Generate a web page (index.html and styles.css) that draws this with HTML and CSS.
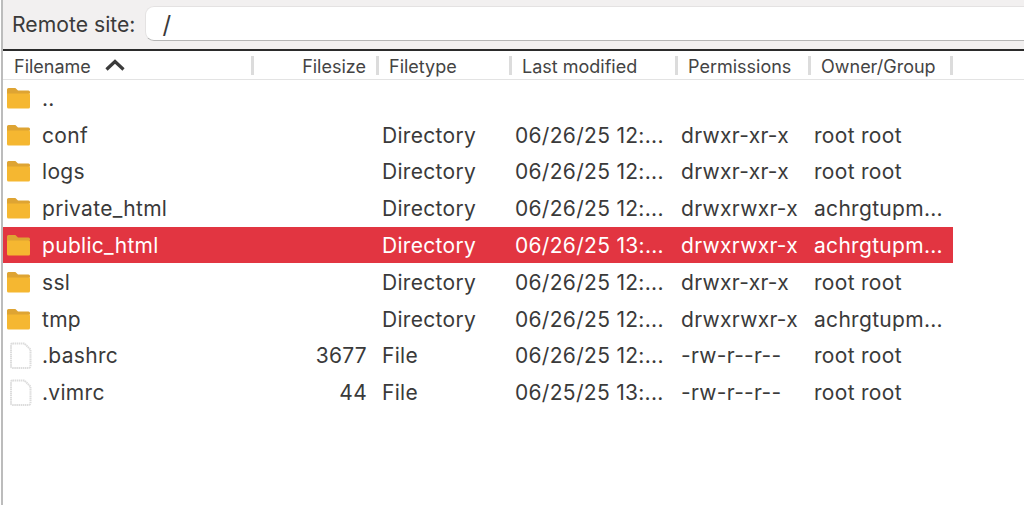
FILE: index.html
```html
<!DOCTYPE html>
<html lang="en">
<head>
    <meta charset="UTF-8">
    <meta name="viewport" content="width=device-width, initial-scale=1.0">
    <title>Remote site</title>
    <link rel="stylesheet" href="styles.css">
</head>
<body>
    <svg class="defs" width="0" height="0">
        <symbol id="folder" viewBox="0 0 25 23">
            <path fill="#f5b731" d="M1 6h21.500a1.500 1.500 0 0 1 1.500 1.500V20a1.500 1.500 0 0 1-1.500 1.500h-20A1.500 1.500 0 0 1 1 20z"/>
            <path fill="#dea433" d="M1 2.500A1.500 1.500 0 0 1 2.500 1h6c1 0 1.500.4 2.200 1.200L12 3.500h10.500A1.500 1.500 0 0 1 24 5v1.500H1z"/>
        </symbol>
        <symbol id="file" viewBox="0 0 22 27">
            <path fill="#fff" stroke="#dcdcdc" stroke-width="2" stroke-dasharray="1.500 .6" d="M2.500 1.500h12l6 6V24a2 2 0 0 1-2 2h-16a1.500 1.500 0 0 1-1.500-1.500V3a1.500 1.500 0 0 1 1.500-1.500z"/>
        </symbol>
    </svg>

    <div class="window">
        <div class="site-bar">
            <label class="site-label">Remote site:</label>
            <div class="site-path">/</div>
        </div>

        <div class="columns header">
            <div class="col-head first">Filename
                <svg class="sort" viewBox="0 0 22 14" width="22" height="14"><path d="M2.500 11.500 11 3.500l8.500 8" fill="none" stroke="#3b3b3b" stroke-width="3.200"/></svg>
            </div>
            <div class="col-head size">Filesize</div>
            <div class="col-head">Filetype</div>
            <div class="col-head">Last modified</div>
            <div class="col-head">Permissions</div>
            <div class="col-head">Owner/Group</div>
        </div>

        <div class="columns row">
            <div class="name"><svg class="icon"><use href="#folder"/></svg>..</div>
            <div></div><div></div><div></div><div></div><div></div>
        </div>
        <div class="columns row">
            <div class="name"><svg class="icon"><use href="#folder"/></svg>conf</div>
            <div class="size"></div><div>Directory</div><div>06/26/25 12:...</div><div>drwxr-xr-x</div><div>root root</div>
        </div>
        <div class="columns row">
            <div class="name"><svg class="icon"><use href="#folder"/></svg>logs</div>
            <div class="size"></div><div>Directory</div><div>06/26/25 12:...</div><div>drwxr-xr-x</div><div>root root</div>
        </div>
        <div class="columns row">
            <div class="name"><svg class="icon"><use href="#folder"/></svg>private_html</div>
            <div class="size"></div><div>Directory</div><div>06/26/25 12:...</div><div>drwxrwxr-x</div><div>achrgtupm...</div>
        </div>
        <div class="columns row selected">
            <div class="name"><svg class="icon"><use href="#folder"/></svg>public_html</div>
            <div class="size"></div><div>Directory</div><div>06/26/25 13:...</div><div>drwxrwxr-x</div><div>achrgtupm...</div>
        </div>
        <div class="columns row">
            <div class="name"><svg class="icon"><use href="#folder"/></svg>ssl</div>
            <div class="size"></div><div>Directory</div><div>06/26/25 12:...</div><div>drwxr-xr-x</div><div>root root</div>
        </div>
        <div class="columns row">
            <div class="name"><svg class="icon"><use href="#folder"/></svg>tmp</div>
            <div class="size"></div><div>Directory</div><div>06/26/25 12:...</div><div>drwxrwxr-x</div><div>achrgtupm...</div>
        </div>
        <div class="columns row">
            <div class="name"><svg class="icon file"><use href="#file"/></svg>.bashrc</div>
            <div class="size">3677</div><div>File</div><div>06/26/25 12:...</div><div>-rw-r--r--</div><div>root root</div>
        </div>
        <div class="columns row">
            <div class="name"><svg class="icon file"><use href="#file"/></svg>.vimrc</div>
            <div class="size">44</div><div>File</div><div>06/25/25 13:...</div><div>-rw-r--r--</div><div>root root</div>
        </div>
    </div>
</body>
</html>
```

FILE: styles.css
```css
html, body {
    height: 100%;
}

body {
    margin: 0;
    overflow: hidden;
    background: #fff;
    color: #3a3a3a;
    font-family: Inter, "Liberation Sans", Arial, sans-serif;
}

.defs {
    display: block;
    height: 0;
}

.window {
    height: 505px;
    margin-left: 1px;
    border-left: 2px solid #bcbcbc;
    box-sizing: border-box;
}

.site-bar {
    display: flex;
    align-items: center;
    gap: 10px;
    height: 49px;
    padding: 6px 0 8px 9px;
    box-sizing: border-box;
    background: #f2f0f0;
}

.site-label {
    font-size: 21.200px;
}

.site-path {
    flex: 1;
    align-self: stretch;
    padding-left: 16px;
    background: #fff;
    border: 1px solid #e4e2e2;
    border-bottom-color: #b5b5b5;
    border-right: 0;
    border-radius: 9px 0 0 9px;
    font-size: 24px;
    line-height: 36px;
}

.columns {
    display: grid;
    grid-template-columns: 251px 125px 133px 166px 133px 142px;
    width: 950px;
}

.header {
    width: auto;
    height: 30.500px;
    padding-top: 1px;
    align-items: center;
    border-top: 2px solid #2b2b2b;
    border-bottom: 1px solid #e3e3e3;
    box-sizing: border-box;
    font-size: 18px;
    color: #444;
}

.col-head {
    display: flex;
    align-items: center;
    height: 19px;
    padding: 2px 0 0 10px;
    border-right: 3px solid #dcdcdc;
    box-sizing: border-box;
    white-space: nowrap;
}

.col-head.first {
    padding-left: 11px;
}

.col-head.size {
    justify-content: flex-end;
    padding-right: 10px;
}

.sort {
    margin-left: 13px;
    margin-top: -2px;
}

.row {
    height: 36.800px;
    padding-top: 1px;
    box-sizing: border-box;
    align-items: center;
    font-size: 21px;
    letter-spacing: .3px;
    color: #3a3a3a;
    white-space: nowrap;
}

.row > div {
    padding-left: 3px;
}

.row > .name {
    display: flex;
    align-items: center;
    padding-left: 3px;
}

.row > .size {
    padding: 0 12px 0 0;
    text-align: right;
}

.icon {
    width: 25px;
    height: 23px;
    margin-right: 11px;
    flex: none;
}

.icon.file {
    width: 22px;
    height: 27px;
    margin-left: 4px;
    margin-right: 10px;
}

.selected {
    background: #e23541;
    color: #fff;
}
```
